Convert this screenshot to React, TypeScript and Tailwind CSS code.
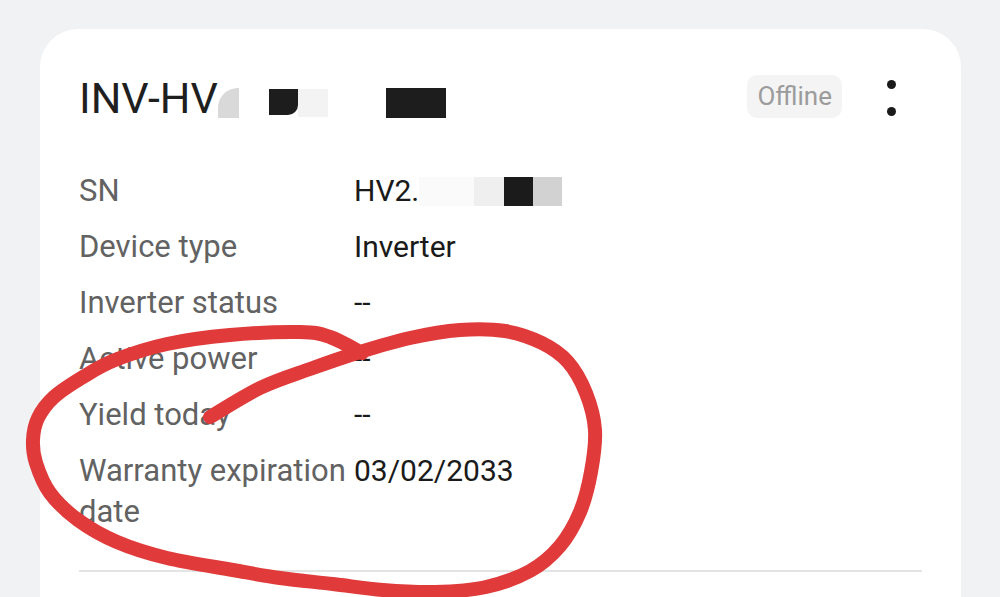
import React from "react";

const rows = [
  { label: "SN", value: "sn" },
  { label: "Device type", value: "Inverter" },
  { label: "Inverter status", value: "--" },
  { label: "Active power", value: "--" },
  { label: "Yield today", value: "--" },
  { label: "Warranty expiration date", value: "03/02/2033" },
];

// hand-drawn marker loop, traced from the screenshot
const markPoints: [number, number][] = [
  [210, 417], [260, 388], [310, 369], [360, 352], [410, 338], [460, 330],
  [505, 331], [542, 343], [568, 362], [586, 393], [595, 430], [591, 472],
  [580, 512], [560, 546], [530, 571], [486, 587], [435, 592], [383, 590],
  [333, 584], [280, 578], [233, 570], [167, 558], [117, 542], [78, 520],
  [50, 493], [36, 463], [33, 440], [38, 418], [54, 397], [83, 377],
  [115, 360], [167, 344], [230, 335], [300, 332], [330, 337], [362, 353],
];

function smoothPath(pts: [number, number][]) {
  let d = `M${pts[0][0]},${pts[0][1]}`;
  for (let i = 0; i < pts.length - 1; i++) {
    const p0 = pts[i - 1] || pts[i];
    const p1 = pts[i];
    const p2 = pts[i + 1];
    const p3 = pts[i + 2] || p2;
    const c1x = p1[0] + (p2[0] - p0[0]) / 6;
    const c1y = p1[1] + (p2[1] - p0[1]) / 6;
    const c2x = p2[0] - (p3[0] - p1[0]) / 6;
    const c2y = p2[1] - (p3[1] - p1[1]) / 6;
    d += ` C${c1x},${c1y} ${c2x},${c2y} ${p2[0]},${p2[1]}`;
  }
  return d;
}

function SerialValue() {
  return (
    <div className="flex items-start">
      <span>HV2.</span>
      <span className="mt-[7px] h-[29px] w-[55px] bg-[#fafafa]" />
      <span className="mt-[7px] h-[29px] w-[30px] bg-[#efefef]" />
      <span className="mt-[7px] h-[29px] w-[29px] bg-[#1b1b1b]" />
      <span className="mt-[7px] h-[29px] w-[29px] bg-[#d2d2d2]" />
    </div>
  );
}

export default function App() {
  return (
    <div
      className="relative h-[597px] w-full overflow-hidden bg-[#f1f2f4] pt-[29px]"
      style={{ fontFamily: "Roboto, 'Noto Sans', sans-serif" }}
    >
      {/* Card */}
      <div className="ml-[40px] w-[921px] h-[700px] rounded-[38px] bg-white px-[39px] pt-[45px]">
        {/* Header */}
        <div className="flex items-start justify-between">
          <div className="flex items-start text-[43px] leading-[48px] text-[#1f1f1f]">
            <span>INV-HV</span>
            <span className="mt-[14px] h-[30px] w-[21px] rounded-tl-[20px] bg-[#d9d9d9]" />
            <span className="ml-[30px] mt-[15px] h-[26px] w-[29px] rounded-br-[10px] bg-[#1d1d1d]" />
            <span className="mt-[15px] h-[28px] w-[30px] bg-[#f3f3f3]" />
            <span className="ml-[58px] mt-[14px] h-[30px] w-[60px] bg-[#1d1d1d]" />
          </div>

          <div className="flex items-start">
            <span className="mt-[1px] flex h-[43px] items-center rounded-[10px] bg-[#f4f4f4] px-[10px] text-[26px] text-[#9b9b9b]">
              Offline
            </span>
            <button className="ml-[45px] mr-[26px] mt-[6px] flex flex-col gap-[18px]">
              <span className="block h-[9px] w-[9px] rounded-full bg-[#1a1a1a]" />
              <span className="block h-[9px] w-[9px] rounded-full bg-[#1a1a1a]" />
            </button>
          </div>
        </div>

        {/* Details */}
        <div className="mt-[48px] grid grid-cols-[272px_1fr] gap-x-[3px] gap-y-[15px] leading-[41px]">
          {rows.map((row) => (
            <React.Fragment key={row.label}>
              <div className="text-[31px] text-[#626262]">{row.label}</div>
              <div className="text-[30px] text-[#1a1a1a]">
                {row.value === "sn" ? <SerialValue /> : row.value}
              </div>
            </React.Fragment>
          ))}
        </div>

        <div className="mt-[38px] h-[2px] w-full bg-[#e4e4e4]" />
      </div>

      {/* Red marker annotation */}
      <svg
        className="pointer-events-none absolute inset-0"
        width="1000"
        height="597"
        viewBox="0 0 1000 597"
      >
        <path
          d={smoothPath(markPoints)}
          fill="none"
          stroke="#e03a3a"
          strokeWidth="14"
          strokeLinecap="round"
          strokeLinejoin="round"
        />
      </svg>
    </div>
  );
}
